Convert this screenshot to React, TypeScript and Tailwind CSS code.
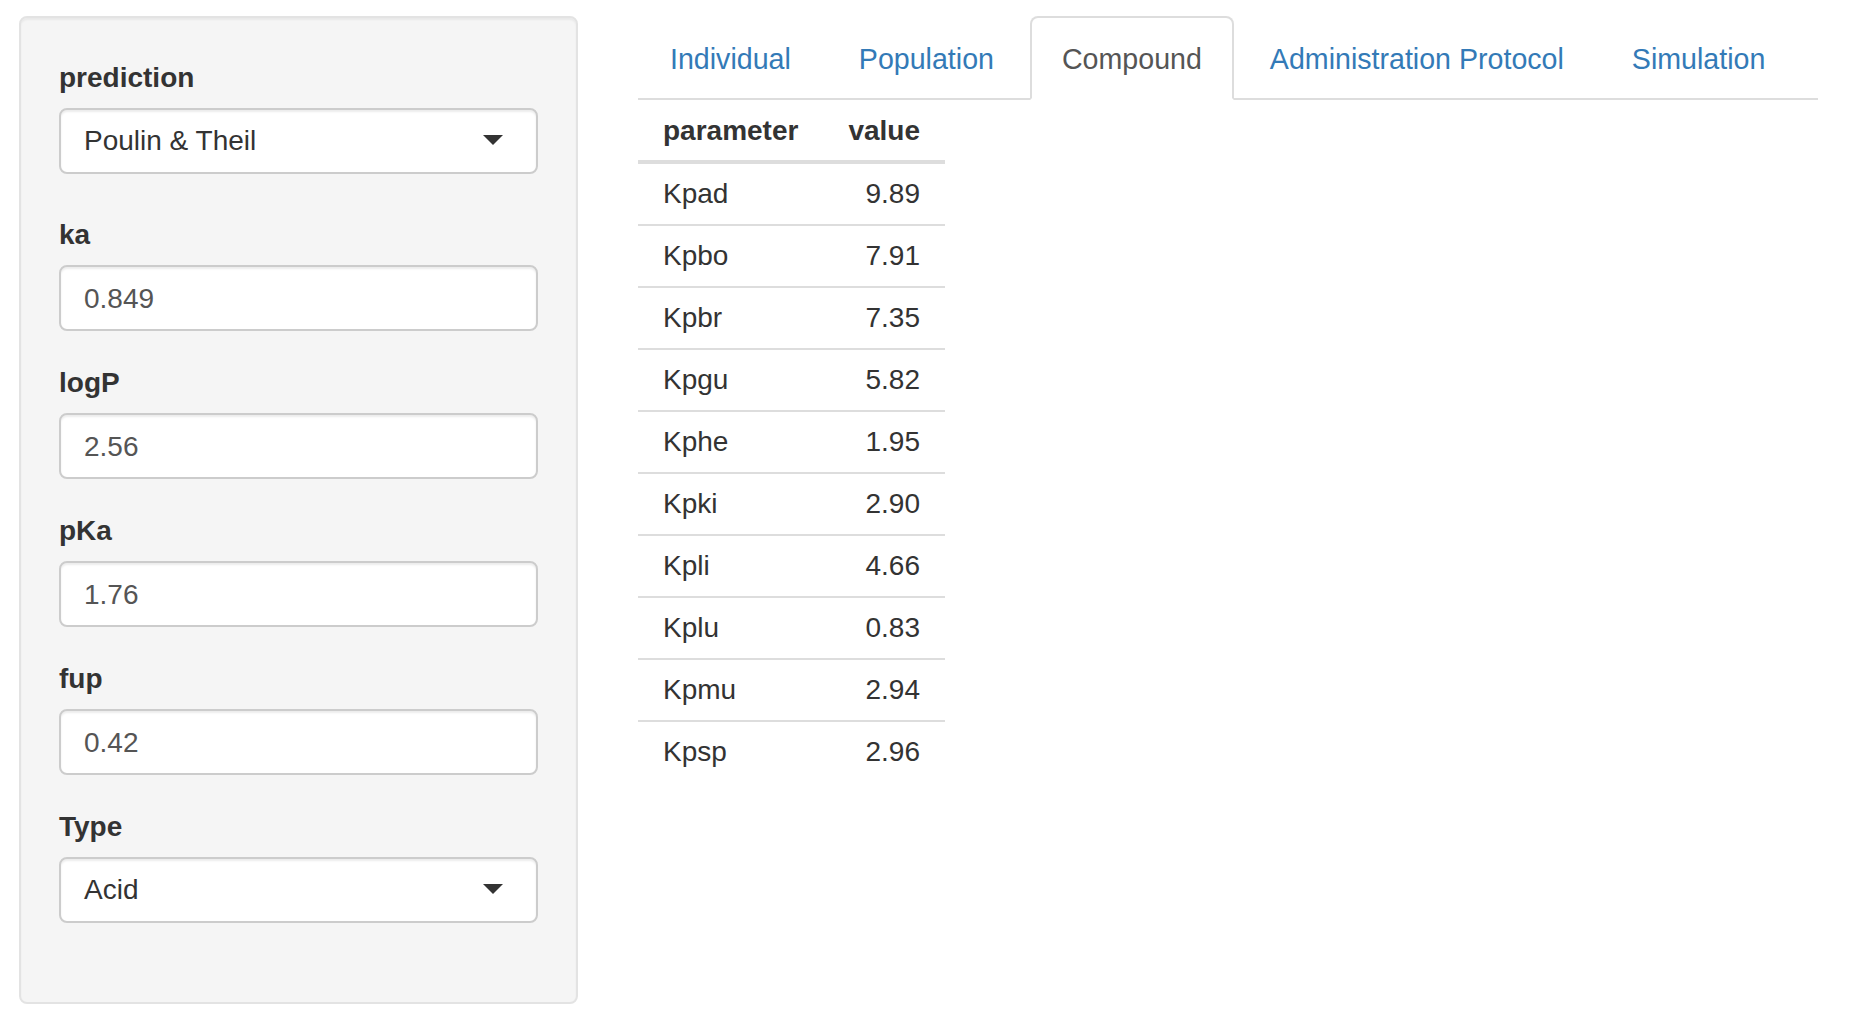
import React from "react";

const fields: { label: string; value: string; kind: "select" | "input" }[] = [
  { label: "prediction", value: "Poulin & Theil", kind: "select" },
  { label: "ka", value: "0.849", kind: "input" },
  { label: "logP", value: "2.56", kind: "input" },
  { label: "pKa", value: "1.76", kind: "input" },
  { label: "fup", value: "0.42", kind: "input" },
  { label: "Type", value: "Acid", kind: "select" },
];

const rows: [string, string][] = [
  ["Kpad", "9.89"],
  ["Kpbo", "7.91"],
  ["Kpbr", "7.35"],
  ["Kpgu", "5.82"],
  ["Kphe", "1.95"],
  ["Kpki", "2.90"],
  ["Kpli", "4.66"],
  ["Kplu", "0.83"],
  ["Kpmu", "2.94"],
  ["Kpsp", "2.96"],
];

const tabs = ["Individual", "Population", "Compound", "Administration Protocol", "Simulation"];

function Field({ label, value, kind }: { label: string; value: string; kind: "select" | "input" }) {
  return (
    <div className={kind === "select" ? "mb-[40px]" : "mb-[31px]"}>
      <div className="h-[42px] leading-[42px] mb-[9px] font-bold text-[#333]">{label}</div>
      {kind === "select" ? (
        <div className="h-[66px] w-full bg-white border-2 border-[#cccccc] rounded-[8px] shadow-[inset_0_2px_2px_rgba(0,0,0,0.075)] flex items-center justify-between pl-[23px] pr-[33px] text-[#333]">
          <span className="leading-[40px]">{value}</span>
          <span className="w-0 h-0 border-x-[10px] border-x-transparent border-t-[10px] border-t-[#333] mb-[3px]" />
        </div>
      ) : (
        <div className="h-[66px] w-full bg-white border-2 border-[#cccccc] rounded-[8px] shadow-[inset_0_2px_2px_rgba(0,0,0,0.075)] flex items-center pl-[23px] text-[#555]">
          <span className="leading-[40px] pt-[2px]">{value}</span>
        </div>
      )}
    </div>
  );
}

export default function App() {
  return (
    <div className="min-h-screen w-full bg-white flex items-start pl-[19px] pt-[16px] pr-[34px] text-[28px] leading-[40px] text-[#333] font-['Liberation_Sans',Arial,Helvetica,sans-serif]">
      <div className="w-[559px] shrink-0 bg-[#f5f5f5] border-2 border-[#e3e3e3] rounded-[8px] px-[38px] pt-[39px] pb-[39px] shadow-[inset_0_2px_2px_rgba(0,0,0,0.05)]">
        {fields.map((f) => (
          <Field key={f.label} {...f} />
        ))}
      </div>
      <div className="ml-[60px] flex-1 min-w-0">
        <ul className="flex border-b-2 border-[#dddddd] text-[28.6px]">
          {tabs.map((t) => {
            const active = t === "Compound";
            return (
              <li key={t} className="-mb-[2px] mr-[4px]">
                <div
                  className={
                    active
                      ? "px-[30px] pt-[21px] pb-[19px] leading-[40px] border-2 border-[#dddddd] border-b-transparent rounded-t-[8px] bg-white text-[#555]"
                      : "px-[30px] pt-[21px] pb-[19px] leading-[40px] border-2 border-transparent rounded-t-[8px] text-[#337ab7]"
                  }
                >
                  {t}
                </div>
              </li>
            );
          })}
        </ul>
        <table className="border-separate border-spacing-0">
          <thead>
            <tr>
              <th className="text-left font-bold px-[25px] pt-[11px] pb-[9px] leading-[40px] border-b-4 border-[#dddddd]">parameter</th>
              <th className="text-right font-bold px-[25px] pt-[11px] pb-[9px] leading-[40px] border-b-4 border-[#dddddd]">value</th>
            </tr>
          </thead>
          <tbody>
            {rows.map(([k, v], i) => (
              <tr key={k}>
                <td className={"text-left px-[25px] py-[10px] leading-[40px] " + (i === 0 ? "" : "border-t-2 border-[#dddddd]")}>{k}</td>
                <td className={"text-right px-[25px] py-[10px] leading-[40px] " + (i === 0 ? "" : "border-t-2 border-[#dddddd]")}>{v}</td>
              </tr>
            ))}
          </tbody>
        </table>
      </div>
    </div>
  );
}
